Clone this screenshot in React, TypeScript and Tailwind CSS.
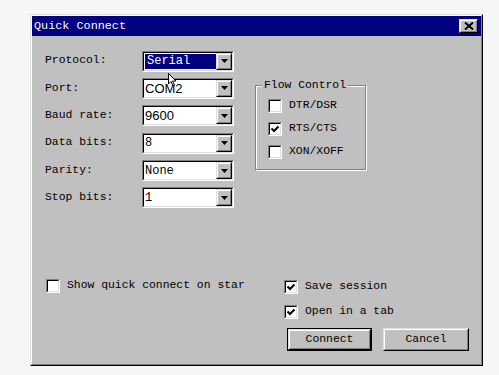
import type { ReactNode } from 'react';

const mono = "[font-family:'Liberation_Mono','DejaVu_Sans_Mono',monospace]";
const narrow = "[font-family:'Liberation_Sans_Narrow','Liberation_Sans',Arial,sans-serif]";

function Raised({ children, className = '' }: { children?: ReactNode; className?: string }) {
  return (
    <div className={`border border-t-[#dfdfdf] border-l-[#dfdfdf] border-r-black border-b-black bg-[#c0c0c0] ${className}`}>
      <div className="h-full w-full border border-t-white border-l-white border-r-[#808080] border-b-[#808080] flex items-center justify-center">
        {children}
      </div>
    </div>
  );
}

function Sunken({ children, className = '' }: { children?: ReactNode; className?: string }) {
  return (
    <div className={`border border-t-[#808080] border-l-[#808080] border-r-white border-b-white ${className}`}>
      <div className="h-full w-full border border-t-black border-l-black border-r-[#dfdfdf] border-b-[#dfdfdf] bg-white flex">
        {children}
      </div>
    </div>
  );
}

function Check({ checked, label }: { checked?: boolean; label: string }) {
  return (
    <div className="flex items-center gap-[7px] h-[14px]">
      <Sunken className="w-[14px] h-[14px] shrink-0">
        {checked && (
          <svg width="10" height="10" viewBox="0 0 10 10" className="m-auto">
            <path d="M1.5 4.5 L4 7 L8.5 2.5" stroke="#000" strokeWidth="2" fill="none" />
          </svg>
        )}
      </Sunken>
      <span className={`${mono} text-[11.4px] leading-none text-black whitespace-nowrap`}>{label}</span>
    </div>
  );
}

function Select({ value, selected, font }: { value: string; selected?: boolean; font?: string }) {
  return (
    <Sunken className="w-[92px] h-[21px]">
      <div className="flex-1 flex items-center pl-[1px] py-[1px]">
        {selected ? (
          <div className={`h-full w-full bg-[#000080] text-white flex items-center pl-[2px] ${mono} text-[12px]`}>{value}</div>
        ) : (
          <span className={`${font ?? mono} ${font ? 'text-[13px]' : 'text-[12px]'} text-black leading-none`}>{value}</span>
        )}
      </div>
      <Raised className="w-[16px] h-full">
        <svg width="7" height="4" viewBox="0 0 7 4">
          <path d="M0 0 H7 L3.5 4 Z" fill="#000" />
        </svg>
      </Raised>
    </Sunken>
  );
}

const rows = [
  { label: 'Protocol:', value: 'Serial', selected: true },
  { label: 'Port:', value: 'COM2', font: narrow },
  { label: 'Baud rate:', value: '9600', font: narrow },
  { label: 'Data bits:', value: '8' },
  { label: 'Parity:', value: 'None' },
  { label: 'Stop bits:', value: '1' },
];

export default function App() {
  return (
    <div className="relative w-[499px] h-[375px] bg-[#f5f6f6] overflow-hidden pt-[14px] pl-[30px]">
      <div className="w-[453px] h-[352px] bg-[#c0c0c0] border border-t-[#dfdfdf] border-l-[#dfdfdf] border-r-black border-b-black">
        <div className="h-full w-full border border-t-white border-l-white border-r-[#808080] border-b-[#808080] flex flex-col">
          <div className="h-[20px] bg-[#000080] flex items-center justify-between pl-[2px] pr-[3px]">
            <span className={`${mono} text-[11.8px] text-white leading-none mt-[2px]`}>Quick Connect</span>
            <Raised className="w-[19px] h-[14px]">
              <svg width="10" height="8" viewBox="0 0 10 8">
                <path d="M1 0.5 L9 7.5 M9 0.5 L1 7.5" stroke="#000" strokeWidth="2" />
              </svg>
            </Raised>
          </div>

          <div className="flex-1 flex flex-col pl-[13px] pt-[14.5px] pb-[13px]">
            <div className="flex items-start">
              <div className="flex flex-col gap-[6.4px] shrink-0">
                {rows.map((r) => (
                  <div key={r.label} className="flex items-center h-[21px]">
                    <span className={`${mono} text-[11.4px] text-black w-[97px] leading-none`}>{r.label}</span>
                    <Select value={r.value} selected={r.selected} font={r.font} />
                  </div>
                ))}
              </div>

              <div className="relative shrink-0 ml-[21px] mt-[34.5px] w-[111px] h-[85px] border border-[#808080] shadow-[inset_1px_1px_0_#fff,1px_1px_0_#fff] flex flex-col gap-[9px] pl-[12px] pt-[13px]">
                <span className={`absolute left-[6px] -top-[8px] ${mono} text-[11.4px] leading-[14px] text-black px-[2px] bg-[#c0c0c0]`}>Flow Control</span>
                <Check label="DTR/DSR" />
                <Check label="RTS/CTS" checked />
                <Check label="XON/XOFF" />
              </div>
            </div>

            <div className="mt-auto flex items-start">
              <div className="w-[239px] pl-[1px] -mt-[1px]">
                <Check label="Show quick connect on star" />
              </div>
              <div className="flex flex-col">
                <Check label="Save session" checked />
                <div className="mt-[11px]">
                  <Check label="Open in a tab" checked />
                </div>
                <div className="mt-[9px] ml-[3px] flex gap-[11px]">
                  <div className="border border-black">
                    <Raised className="w-[83px] h-[21px]">
                      <span className={`${mono} text-[11.4px] text-black leading-none`}>Connect</span>
                    </Raised>
                  </div>
                  <Raised className="w-[86px] h-[23px]">
                    <span className={`${mono} text-[11.4px] text-black leading-none`}>Cancel</span>
                  </Raised>
                </div>
              </div>
            </div>
          </div>
        </div>
      </div>

      <svg width="9" height="14" viewBox="0 0 9 14" className="absolute left-[168px] top-[73px]">
        <path d="M0.5 0.5 V11 L3 8.5 L5 13 L6.5 12.3 L4.6 8 H8 Z" fill="#fff" stroke="#000" strokeWidth="1" />
      </svg>
    </div>
  );
}
